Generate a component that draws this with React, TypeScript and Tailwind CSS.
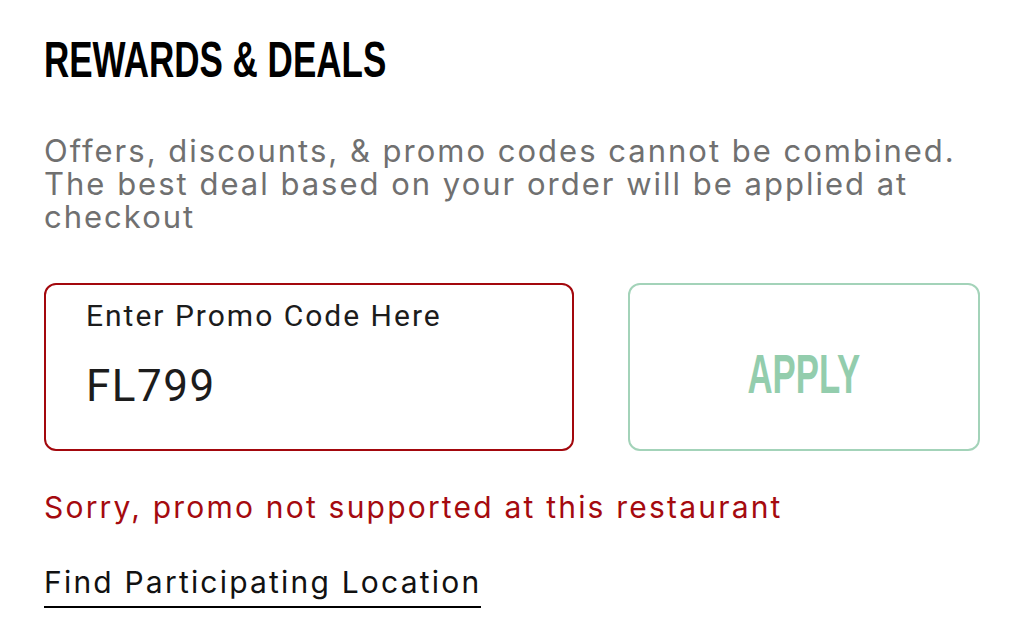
export default function App() {
  return (
    <div className="min-h-[637px] w-[1024px] bg-white pl-[44px] pr-[44px] pt-[30px] font-['Inter',sans-serif]">
      <h1 className="origin-left scale-x-[0.7] font-['Liberation_Sans',sans-serif] text-[50px] font-bold leading-[60px] text-black">
        REWARDS &amp; DEALS
      </h1>

      <p className="mt-[44px] text-[31px] leading-[33px] tracking-[2px] text-[#707070]">
        Offers, discounts, &amp; promo codes cannot be combined. The best deal based on your order will be applied at checkout
      </p>

      <div className="mt-[50px] flex gap-[54px]">
        <div className="flex h-[168px] w-[530px] flex-col rounded-[12px] border-2 border-[#a3080d] pl-[40px] pt-[11px] font-['Roboto',sans-serif] text-[#1c1c1c]">
          <span className="text-[30px] leading-[40px] tracking-[2px]">Enter Promo Code Here</span>
          <span className="mt-[25px] text-[44px] leading-[50px] tracking-[1.5px]">FL799</span>
        </div>
        <button className="flex h-[168px] flex-1 items-center justify-center rounded-[12px] border-2 border-[#a3d3b9] bg-white">
          <span className="mt-[14px] scale-x-[0.62] font-['Liberation_Sans',sans-serif] text-[56px] font-bold leading-none text-[#93cdad]">
            APPLY
          </span>
        </button>
      </div>

      <p className="mt-[36px] text-[30px] leading-[40px] tracking-[2.2px] text-[#a50a0f]">
        Sorry, promo not supported at this restaurant
      </p>

      <a className="mt-[37px] inline-block border-b-2 border-black pb-[6px] text-[30px] leading-[36px] tracking-[2.2px] text-[#111]">
        Find Participating Location
      </a>
    </div>
  );
}
